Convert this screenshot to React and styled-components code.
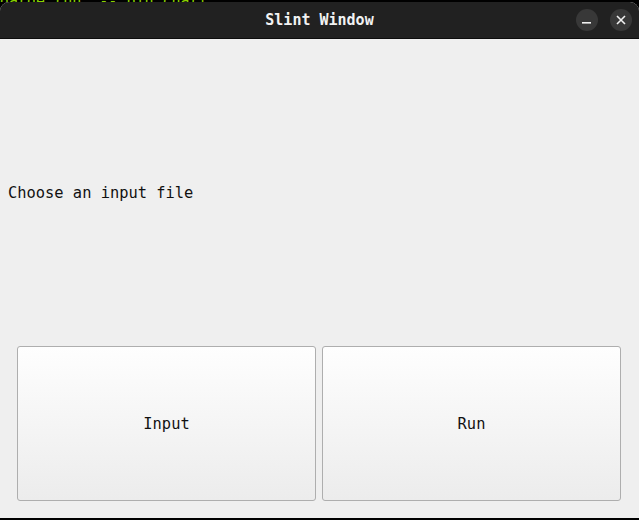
import styled, { createGlobalStyle } from "styled-components";

const Global = createGlobalStyle`
  html, body {
    margin: 0;
    padding: 0;
    background: #000;
  }
  body {
    width: 639px;
    height: 520px;
    overflow: hidden;
    font-family: "DejaVu Sans Mono", "Liberation Mono", monospace;
  }
`;

const Screen = styled.div`
  display: flex;
  flex-direction: column;
  width: 639px;
  height: 520px;
  background: #000;
`;

const TerminalStrip = styled.div`
  height: 2px;
  overflow: hidden;
  color: #8ad200;
  font-size: 15px;
  line-height: 2px;
  white-space: pre;
`;

const Window = styled.div`
  display: flex;
  flex-direction: column;
  flex: 1;
  margin-bottom: 2px;
  border-radius: 9px 9px 0 0;
  overflow: hidden;
  background: #efefef;
`;

const TitleBar = styled.div`
  position: relative;
  display: flex;
  align-items: center;
  justify-content: center;
  height: 36px;
  background: #212121;
  border-bottom: 1px solid #0d0d0d;
  flex-shrink: 0;
`;

const Title = styled.span`
  color: #f2f2f2;
  font-size: 15px;
  font-weight: bold;
`;

const Controls = styled.div`
  position: absolute;
  right: 7px;
  top: 7px;
  display: flex;
  gap: 12px;
`;

const RoundButton = styled.div`
  width: 22px;
  height: 22px;
  border-radius: 50%;
  background: #383838;
  display: flex;
  align-items: center;
  justify-content: center;
`;

const Content = styled.div`
  display: flex;
  flex-direction: column;
  flex: 1;
`;

const LabelArea = styled.div`
  flex: 1;
  display: flex;
  align-items: center;
  padding-left: 8px;
  padding-top: 1px;
`;

const Label = styled.span`
  font-size: 15.4px;
  color: #111;
`;

const ButtonRow = styled.div`
  display: flex;
  gap: 6px;
  padding: 0 18px 17px 17px;
`;

const BigButton = styled.button`
  flex: 1;
  height: 155px;
  border: 1px solid #aeaeae;
  border-radius: 3px;
  background: linear-gradient(#fefefe, #ececec);
  font-family: "DejaVu Sans Mono", "Liberation Mono", monospace;
  font-size: 15.4px;
  color: #111;
  padding: 0;
`;

const App = () => {
  return (
    <Screen>
      <Global />
      <TerminalStrip>{"garde run  -- bin chart"}</TerminalStrip>
      <Window>
        <TitleBar>
          <Title>Slint Window</Title>
          <Controls>
            <RoundButton>
              <svg width="10" height="10" viewBox="0 0 10 10">
                <rect x="0" y="7" width="9" height="1.6" fill="#f0f0f0" />
              </svg>
            </RoundButton>
            <RoundButton>
              <svg width="10" height="10" viewBox="0 0 10 10">
                <path d="M1 1 L9 9 M9 1 L1 9" stroke="#f0f0f0" strokeWidth="1.6" />
              </svg>
            </RoundButton>
          </Controls>
        </TitleBar>
        <Content>
          <LabelArea>
            <Label>Choose an input file</Label>
          </LabelArea>
          <ButtonRow>
            <BigButton>Input</BigButton>
            <BigButton>Run</BigButton>
          </ButtonRow>
        </Content>
      </Window>
    </Screen>
  );
};

export default App;
